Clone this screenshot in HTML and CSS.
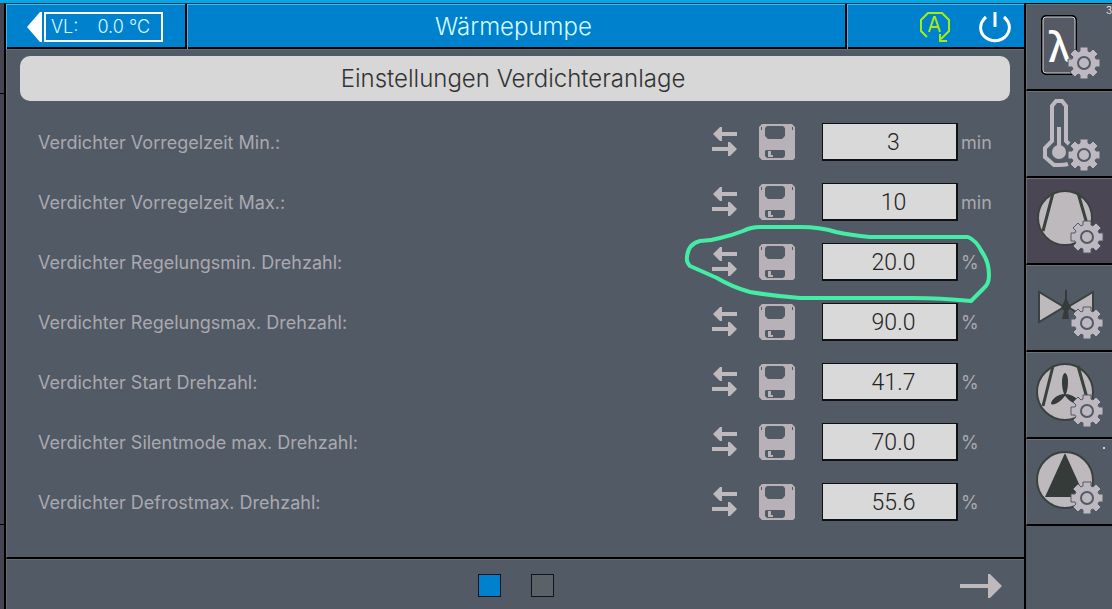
FILE: index.html
```html
<!DOCTYPE html>
<html lang="de">

<head>
    <meta charset="UTF-8">
    <meta name="viewport" content="width=device-width, initial-scale=1.0">
    <title>Wärmepumpe</title>
    <link rel="stylesheet" href="styles.css">
</head>

<body>
    <svg class="symbols" aria-hidden="true">
        <symbol id="swap" viewBox="0 0 28 32">
            <path d="M3 8L10 1H12V6H27V10H12V15H10ZM27 23L20 16H18V21H2V25H18V30H20Z" />
        </symbol>
        <symbol id="disk" viewBox="0 0 44 38">
            <path fill-rule="evenodd"
                d="M4 1H34L37 4V35L35 37H4L1 34V4ZM9 3L7 5V13L10 16H24L27 13V5L25 3ZM7 28V33L9 35H25L27 33V28L26 27H8ZM10 28H13V32H15V34H10Z" />
            <path class="notch" d="M3 4h1v3h-1zM34 4h1v3h-1z" />
        </symbol>
        <symbol id="gear" viewBox="-18 -18 36 36">
            <path class="gear-body"
                d="M-4 -16H4V-12L6 -11L9 -14L14 -9L11 -6L12 -4H16V4H12L11 6L14 9L9 14L6 11L4 12V16H-4V12L-6 11L-9 14L-14 9L-11 6L-12 4H-16V-4H-12L-11 -6L-14 -9L-9 -14L-6 -11L-4 -12Z" />
            <circle class="gear-hole" r="6" />
        </symbol>
    </svg>

    <div class="screen">
        <div class="rail">
            <div></div>
            <div></div>
            <div></div>
        </div>

        <main class="panel">
            <header class="header">
                <button class="flow" type="button">
                    <svg width="16" height="32" viewBox="0 0 16 32" aria-hidden="true">
                        <path d="M0 16L13 1H15V31H13Z" />
                    </svg>
                    <span class="flow-value"><span>VL:</span><span>0.0 °C</span></span>
                </button>
                <h1>Wärmepumpe</h1>
                <div class="status">
                    <button type="button" aria-label="Automatik">
                        <svg width="32" height="32" viewBox="0 0 32 32" class="auto">
                            <path d="M8 26L2 20V9L9 2H23L30 9V20L22 28" />
                            <path d="M21 23V30H28" />
                            <path d="M10 21L15 6H16L21 21M12 16H19" />
                        </svg>
                    </button>
                    <button type="button" aria-label="Ein/Aus">
                        <svg width="32" height="32" viewBox="0 0 32 32" class="power">
                            <path d="M7 6C-1 13 1 22 6 26C12 31 20 31 26 26C31 21 33 13 25 6M16 1V16" />
                        </svg>
                    </button>
                </div>
            </header>

            <section class="content">
                <h2>Einstellungen Verdichteranlage</h2>
                <form class="settings">
                    <div class="row">
                        <label for="vorMin">Verdichter Vorregelzeit Min.:</label>
                        <button type="button" aria-label="Übertragen"><svg class="swap"><use href="#swap" /></svg></button>
                        <button type="button" aria-label="Speichern"><svg class="disk"><use href="#disk" /></svg></button>
                        <div class="field"><input id="vorMin" type="text" value="3"><span>min</span></div>
                    </div>
                    <div class="row">
                        <label for="vorMax">Verdichter Vorregelzeit Max.:</label>
                        <button type="button" aria-label="Übertragen"><svg class="swap"><use href="#swap" /></svg></button>
                        <button type="button" aria-label="Speichern"><svg class="disk"><use href="#disk" /></svg></button>
                        <div class="field"><input id="vorMax" type="text" value="10"><span>min</span></div>
                    </div>
                    <div class="row">
                        <label for="regMin">Verdichter Regelungsmin. Drehzahl:</label>
                        <button type="button" aria-label="Übertragen"><svg class="swap"><use href="#swap" /></svg></button>
                        <button type="button" aria-label="Speichern"><svg class="disk"><use href="#disk" /></svg></button>
                        <div class="field"><input id="regMin" type="text" value="20.0"><span>%</span></div>
                        <!-- hand-drawn marker around this value -->
                        <svg class="marker" viewBox="680 220 320 90" aria-hidden="true">
                            <path d="M760 227H800Q820 227 836 232Q850 235 870 237H968Q976 240 982 252Q989 262 989 275Q989 284 984 288L971 301Q940 298 913 298H800Q774 296 750 292Q732 287 717 278L690 266Q686 262 687 257Q688 244 700 241Q710 241 720 238Q733 235 743 231Q751 227 760 227Z" />
                        </svg>
                    </div>
                    <div class="row">
                        <label for="regMax">Verdichter Regelungsmax. Drehzahl:</label>
                        <button type="button" aria-label="Übertragen"><svg class="swap"><use href="#swap" /></svg></button>
                        <button type="button" aria-label="Speichern"><svg class="disk"><use href="#disk" /></svg></button>
                        <div class="field"><input id="regMax" type="text" value="90.0"><span>%</span></div>
                    </div>
                    <div class="row">
                        <label for="start">Verdichter Start Drehzahl:</label>
                        <button type="button" aria-label="Übertragen"><svg class="swap"><use href="#swap" /></svg></button>
                        <button type="button" aria-label="Speichern"><svg class="disk"><use href="#disk" /></svg></button>
                        <div class="field"><input id="start" type="text" value="41.7"><span>%</span></div>
                    </div>
                    <div class="row">
                        <label for="silent">Verdichter Silentmode max. Drehzahl:</label>
                        <button type="button" aria-label="Übertragen"><svg class="swap"><use href="#swap" /></svg></button>
                        <button type="button" aria-label="Speichern"><svg class="disk"><use href="#disk" /></svg></button>
                        <div class="field"><input id="silent" type="text" value="70.0"><span>%</span></div>
                    </div>
                    <div class="row">
                        <label for="defrost">Verdichter Defrostmax. Drehzahl:</label>
                        <button type="button" aria-label="Übertragen"><svg class="swap"><use href="#swap" /></svg></button>
                        <button type="button" aria-label="Speichern"><svg class="disk"><use href="#disk" /></svg></button>
                        <div class="field"><input id="defrost" type="text" value="55.6"><span>%</span></div>
                    </div>
                </form>
            </section>

            <footer class="footer">
                <div class="pages">
                    <button class="page current" type="button" aria-label="Seite 1"></button>
                    <button class="page" type="button" aria-label="Seite 2"></button>
                </div>
                <button class="next" type="button" aria-label="Weiter">
                    <svg width="44" height="28" viewBox="0 0 44 28">
                        <path d="M0 13H28V3H30L42 15L30 27H28V17H0Z" />
                    </svg>
                </button>
            </footer>
        </main>

        <nav class="side">
            <button type="button" aria-label="Lambda">
                <svg class="icon" viewBox="0 0 84 84">
                    <rect class="frame-dark" x="15" y="11" width="34" height="58" rx="4" />
                    <rect class="frame" x="16" y="12" width="32" height="56" rx="3" />
                    <text class="lambda" x="33" y="57">λ</text>
                    <use href="#gear" x="39" y="40" width="36" height="36" />
                </svg>
            </button>
            <button type="button" aria-label="Temperatur">
                <svg class="icon" viewBox="0 0 84 84">
                    <path class="tube" d="M41 72Q38 73 32 73H27L18 65V56L25 49V14L29 9H35L39 14V49L42 52" />
                    <circle class="light" cx="32" cy="60" r="7" />
                    <path class="light" d="M30 35H34V56H30Z" />
                    <use href="#gear" x="39" y="45" width="36" height="36" />
                </svg>
            </button>
            <button class="active" type="button" aria-label="Verdichter">
                <svg class="icon" viewBox="0 0 84 84">
                    <circle class="disc" cx="38" cy="39" r="27" />
                    <path class="line" d="M26 14L16 52M51 14L60 45" />
                    <use href="#gear" x="42" y="40" width="36" height="36" />
                </svg>
            </button>
            <button type="button" aria-label="Ventil">
                <svg class="icon" viewBox="0 0 84 84">
                    <path class="disc" d="M12 26V56L37 41ZM66 26V56L41 41Z" />
                    <path class="dark" d="M38 24H40V33L42 38L44 41L41 45L42 53H35L37 45L34 41L36 38L38 33Z" />
                    <use href="#gear" x="42" y="39" width="36" height="36" />
                </svg>
            </button>
            <button type="button" aria-label="Ventilator">
                <svg class="icon" viewBox="0 0 84 84">
                    <circle class="disc" cx="38" cy="39" r="28" />
                    <path class="line" d="M26 13L16 53M51 13L60 45" />
                    <path class="dark" d="M38 43C34 36 34 21 38 20C42 21 42 36 38 43ZM39 41C35 48 27 53 24 51C24 46 32 40 39 41ZM37 41C41 48 50 53 53 51C52 46 44 40 37 41Z" />
                    <use href="#gear" x="42" y="40" width="36" height="36" />
                </svg>
            </button>
            <button type="button" aria-label="Pumpe">
                <svg class="icon" viewBox="0 0 84 84">
                    <circle class="disc" cx="38" cy="40" r="28" />
                    <path class="dark" d="M38 13L58 57H18Z" />
                    <circle class="dot" cx="77" cy="8" r="1" />
                    <use href="#gear" x="42" y="40" width="36" height="36" />
                </svg>
            </button>
            <span class="counter">3</span>
        </nav>
    </div>
</body>

</html>
```
FILE: styles.css
```css
* {
    box-sizing: border-box;
    margin: 0;
    padding: 0;
}

body {
    background-color: #525a65;
    font-family: Inter, "Liberation Sans", sans-serif;
    font-weight: 300;
}

button {
    background: none;
    border: none;
    font: inherit;
    color: inherit;
    cursor: pointer;
}

svg {
    display: block;
}

.symbols {
    position: absolute;
    width: 0;
    height: 0;
}

.screen {
    min-height: 100vh;
    border-top: 3px solid #09a6e3;
    display: grid;
    grid-template-columns: 4px 1fr 88px;
}

.rail {
    background-color: #454450;
    display: grid;
    grid-template-rows: 90px 431px 1fr;
}

.rail div + div {
    border-top: 1px solid black;
}

.panel {
    border-left: 2px solid black;
    border-top: 1px solid #063b5c;
    display: flex;
    flex-direction: column;
}

.header {
    background-color: #0081cd;
    color: #d6fbff;
    border-bottom: 2px solid black;
    display: grid;
    grid-template-columns: 181px 1fr 177px;
    height: 45px;
}

.header > * {
    border-top: 1px solid #4db4df;
    border-left: 1px solid #4db4df;
}

.header > * + * {
    box-shadow: -2px 0 black;
}

.flow {
    display: flex;
    align-items: center;
    padding-left: 20px;
    gap: 1px;
}

.flow path {
    fill: white;
}

.flow-value {
    display: flex;
    justify-content: space-between;
    width: 119px;
    padding: 3px 11px 3px 5px;
    border: 2px solid white;
    font-size: 18px;
    line-height: 20px;
}

h1 {
    font-size: 24px;
    font-weight: 300;
    line-height: 44px;
    padding-right: 8px;
    text-align: center;
}

.status {
    display: flex;
    align-items: center;
    justify-content: flex-end;
    gap: 28px;
    padding-right: 13px;
}

.status path {
    fill: none;
}

.auto {
    stroke: #a4ec12;
    stroke-width: 2;
}

.power {
    stroke: white;
    stroke-width: 3;
}

.content {
    flex: 1;
    padding: 6px 14px 14px 13px;
    border-top: 1px solid #686c6e;
    border-left: 1px solid #686c6e;
    border-bottom: 2px solid black;
}

h2 {
    background-color: #d7d7d7;
    color: #333;
    border-radius: 10px;
    font-size: 24px;
    font-weight: 300;
    line-height: 45px;
    padding-right: 4px;
    text-align: center;
}

.settings {
    padding: 11px 10px 0 18px;
}

.row {
    position: relative;
    display: grid;
    grid-template-columns: 1fr 28px 44px 178px;
    column-gap: 20px;
    align-items: center;
    height: 60px;
    color: #aaa9b0;
    font-size: 18px;
    font-weight: 400;
}

.swap {
    width: 28px;
    height: 32px;
    fill: #beb9bd;
}

.disk {
    width: 44px;
    height: 38px;
    fill: #b8b2b8;
}

.notch {
    fill: #525a65;
}

.field {
    display: flex;
    align-items: center;
    gap: 3px;
}

input {
    width: 136px;
    height: 38px;
    background-color: #d9d9d9;
    border: 1px solid #111;
    border-right-width: 2px;
    border-bottom-width: 2px;
    padding: 2px 0 0 8px;
    color: #222;
    font: 300 23px Roboto, "Liberation Sans", sans-serif;
    text-align: center;
}

.marker {
    position: absolute;
    right: 0;
    top: -12px;
    width: 320px;
    height: 90px;
    pointer-events: none;
}

.marker path {
    fill: none;
    stroke: #43eda6;
    stroke-width: 4;
    stroke-linejoin: round;
}

.footer {
    border-top: 1px solid #686c6e;
    border-left: 1px solid #686c6e;
    display: grid;
    grid-template-columns: 1fr auto 1fr;
    align-items: center;
    height: 50px;
}

.pages {
    grid-column: 2;
    display: flex;
    gap: 30px;
    padding-top: 2px;
}

.page {
    width: 23px;
    height: 23px;
    border: 1px solid #10151b;
    background-color: #5a6167;
}

.page.current {
    background-color: #0081cd;
}

.next {
    justify-self: end;
    margin-right: 20px;
}

.next path {
    fill: #beb9bd;
}

.side {
    position: relative;
    border-left: 2px solid black;
    border-top: 1px solid black;
}

.side button {
    display: block;
    width: 100%;
    height: 87px;
    border-top: 1px solid #6c7074;
    border-left: 1px solid #6c7074;
    border-bottom: 2px solid black;
}

.side .active {
    background-color: #4b4654;
}

.icon {
    width: 84px;
    height: 84px;
}

.gear-body {
    fill: #beb9c0;
    stroke: #525a65;
    stroke-width: 1;
}

.gear-hole {
    fill: #beb9c0;
    stroke: #525a65;
    stroke-width: 2;
}

.frame-dark {
    fill: none;
    stroke: black;
    stroke-width: 2;
}

.frame {
    fill: #555a65;
    stroke: #d5d5da;
    stroke-width: 1;
}

.lambda {
    fill: white;
    font: 500 42px "Noto Sans", sans-serif;
    text-anchor: middle;
}

.tube {
    fill: none;
    stroke: #beb9c0;
    stroke-width: 4;
}

.light {
    fill: #beb9c0;
}

.disc {
    fill: #beb9bd;
    stroke: #3a423e;
    stroke-width: 2;
}

.line {
    fill: none;
    stroke: #3a423e;
    stroke-width: 3;
}

.dark {
    fill: #343b38;
}

.dot {
    fill: white;
}

.counter {
    position: absolute;
    right: 0;
    top: 0;
    color: white;
    font-size: 10px;
    line-height: 12px;
}
```
